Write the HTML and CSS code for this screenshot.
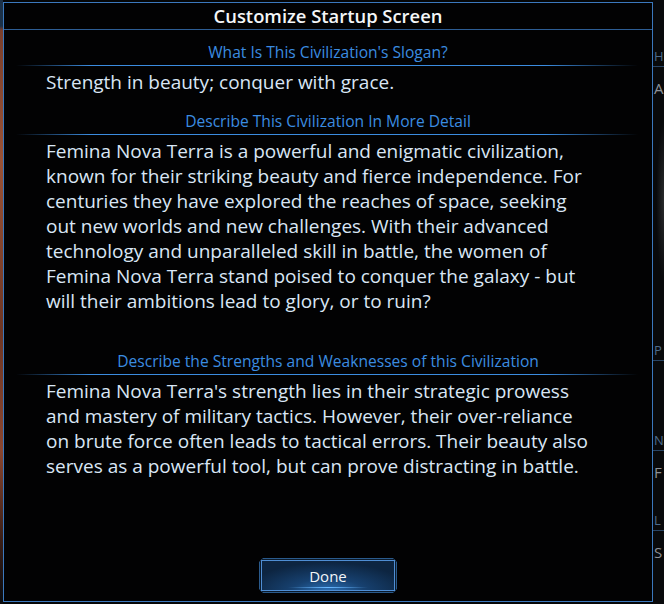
FILE: index.html
```html
<!DOCTYPE html>
<html lang="en">
<head>
    <meta charset="UTF-8">
    <meta name="viewport" content="width=device-width, initial-scale=1.0">
    <title>Customize Startup Screen</title>
    <link rel="stylesheet" href="styles.css">
</head>
<body>
    <div class="scene"></div>

    <div class="dialog">
        <h1 class="dialog-title">Customize Startup Screen</h1>

        <section class="field">
            <h2 class="field-label">What Is This Civilization's Slogan?</h2>
            <p class="field-text">Strength in beauty; conquer with grace.</p>
        </section>

        <section class="field">
            <h2 class="field-label">Describe This Civilization In More Detail</h2>
            <p class="field-text tall">Femina Nova Terra is a powerful and enigmatic civilization,<br>
                known for their striking beauty and fierce independence. For<br>
                centuries they have explored the reaches of space, seeking<br>
                out new worlds and new challenges. With their advanced<br>
                technology and unparalleled skill in battle, the women of<br>
                Femina Nova Terra stand poised to conquer the galaxy - but<br>
                will their ambitions lead to glory, or to ruin?</p>
        </section>

        <section class="field">
            <h2 class="field-label">Describe the Strengths and Weaknesses of this Civilization</h2>
            <p class="field-text">Femina Nova Terra's strength lies in their strategic prowess<br>
                and mastery of military tactics. However, their over-reliance<br>
                on brute force often leads to tactical errors. Their beauty also<br>
                serves as a powerful tool, but can prove distracting in battle.</p>
        </section>

        <div class="dialog-footer">
            <button class="done-btn" type="button">Done</button>
        </div>
    </div>

    <div class="side">
        <div class="side-label home">H</div>
        <div class="side-value">A</div>
        <div class="side-glow"></div>
        <div class="side-label">P</div>
        <div class="side-label name">N</div>
        <div class="side-value">F</div>
        <div class="side-label leader">L</div>
        <div class="side-value">S</div>
    </div>
</body>
</html>
```

FILE: styles.css
```css
body {
    margin: 0;
    width: 664px;
    height: 604px;
    overflow: hidden;
    display: flex;
    background: #050607;
    font-family: "Open Sans", "Liberation Sans", sans-serif;
}

.scene {
    width: 3px;
    flex-shrink: 0;
    background: linear-gradient(#1c3148 0, #1c3148 26px, #7a3f2c 30px, #9a5236 160px, #6e3624 330px, #8a4630 450px, #3a1e16 540px, #0b0c10 600px);
}

.dialog {
    width: 648px;
    height: 598px;
    margin-top: 2px;
    flex-shrink: 0;
    border: 1px solid #3b78bd;
    background: #020203;
    display: flex;
    flex-direction: column;
}

.dialog-title {
    margin: 0;
    height: 26px;
    line-height: 26px;
    border-bottom: 1px solid #2d5d94;
    text-align: center;
    color: #f4f6f8;
    font-size: 18.4px;
    font-weight: 600;
}

.field:first-of-type {
    margin-top: 11px;
}

.field-label {
    margin: 0;
    line-height: 22px;
    text-align: center;
    color: #3b8ce0;
    font-size: 15.6px;
    font-weight: 400;
    padding-bottom: 4px;
}

.field-label::after {
    content: "";
    display: block;
    height: 1px;
    margin: 2px 14px 0 12px;
    background: linear-gradient(90deg, rgba(59,140,224,0) 0, #3b8ce0 12%, #3b8ce0 85%, rgba(59,140,224,0) 100%);
}

.field-text {
    margin: 0 0 15px;
    padding: 0 10px 0 42px;
    line-height: 25px;
    white-space: nowrap;
    color: #d9e6f5;
    font-size: 19px;
}

.field-text.tall {
    margin-bottom: 36px;
}

.dialog-footer {
    margin-top: auto;
    padding-bottom: 8px;
    display: flex;
    justify-content: center;
}

.done-btn {
    width: 138px;
    height: 35px;
    padding: 0;
    border: 1px solid #2a5a8c;
    background: radial-gradient(ellipse 60% 90% at 50% 100%, #2e74bb 0%, #174170 45%, #0d2541 100%);
    box-shadow: inset 0 0 0 1px #0a1a2c, inset 0 0 0 2px #4f8ed4;
    clip-path: polygon(4px 0, 134px 0, 138px 4px, 138px 31px, 134px 35px, 4px 35px, 0 31px, 0 4px);
    color: #f2f5f8;
    font-family: "Open Sans", "Liberation Sans", sans-serif;
    font-size: 15px;
    position: relative;
    cursor: pointer;
}

.done-btn::after {
    content: "";
    position: absolute;
    left: 28px;
    right: 28px;
    bottom: 4px;
    height: 1px;
    background: linear-gradient(90deg, rgba(90,170,255,0), #6ab8ff, rgba(90,170,255,0));
}

.side {
    flex: 1;
    overflow: hidden;
    background: #08090b;
}

.side-label {
    color: #4d6c8c;
    font-size: 13px;
    line-height: 20px;
    padding-left: 1px;
    border-bottom: 1px solid #2a4564;
}

.side-label.home {
    margin-top: 46px;
}

.side-label.name {
    margin-top: 69px;
}

.side-label.leader {
    margin-top: 17px;
}

.side-value {
    color: #8d9299;
    font-size: 15px;
    line-height: 42px;
    padding-left: 1px;
}

.side-glow {
    height: 231px;
    background: radial-gradient(ellipse 100% 50% at 100% 40%, #2a2b2d, #08090b 70%);
}
```
